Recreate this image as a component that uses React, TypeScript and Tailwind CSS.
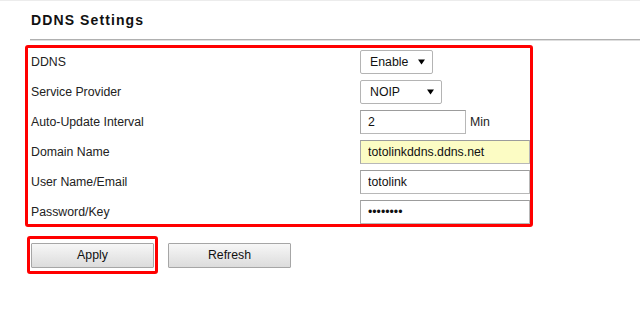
import React from 'react';

const rows = [
  { label: 'DDNS', kind: 'select', value: 'Enable', width: 'w-[73px]' },
  { label: 'Service Provider', kind: 'select', value: 'NOIP', width: 'w-[82px]' },
  { label: 'Auto-Update Interval', kind: 'interval', value: '2' },
  { label: 'Domain Name', kind: 'domain', value: 'totolinkddns.ddns.net' },
  { label: 'User Name/Email', kind: 'text', value: 'totolink' },
  { label: 'Password/Key', kind: 'password', value: 'totolink' },
];

const Caret = () => (
  <svg width="7" height="6" viewBox="0 0 7 6" className="shrink-0">
    <path d="M0 0.5 L7 0.5 L3.5 5.5 Z" fill="#000" />
  </svg>
);

const FakeSelect = ({ value, width }: { value: string; width: string }) => (
  <div
    className={`${width} h-[24px] flex items-center justify-between pl-[9px] pr-[7px] bg-white border border-[#b4b4b4] rounded-[2px] text-[#111]`}
  >
    <span>{value}</span>
    <Caret />
  </div>
);

const inputBase =
  'h-[24px] pl-[7px] border border-[#b8b8b8] border-t-[#9c9c9c] border-l-[#a8a8a8] text-[#111] outline-none';

const App = () => {
  return (
    <div className="w-[640px] h-[315px] bg-white border-t border-[#ececec] font-['Liberation_Sans',Arial,sans-serif] text-[12.3px] text-[#222]">
      <div className="pl-[30px] pt-[11px]">
        <h1 className="pl-[1px] text-[14px] leading-[16px] font-bold tracking-[1.1px] text-[#111]">
          DDNS Settings
        </h1>
        <div className="mt-[11px] h-[2px] bg-[#b0b0b0] border-b border-[#dedede]" />
      </div>

      {/* Settings box */}
      <div className="ml-[25px] mt-[4px] w-[508px] border-[3px] border-[#ff0000] rounded-[3px] pt-[2px] flex flex-col gap-[6px]">
        {rows.map((row) => (
          <div key={row.label} className="h-[24px] flex items-center">
            <div className="w-[332px] pl-[3px]">{row.label}</div>
            {row.kind === 'select' && <FakeSelect value={row.value} width={row.width!} />}
            {row.kind === 'interval' && (
              <div className="flex items-center">
                <input readOnly value={row.value} className={`${inputBase} w-[106px] bg-white`} />
                <span className="ml-[4px]">Min</span>
              </div>
            )}
            {row.kind === 'domain' && (
              <input readOnly value={row.value} className={`${inputBase} w-[170px] bg-[#fcfcc4]`} />
            )}
            {row.kind === 'text' && (
              <input readOnly value={row.value} className={`${inputBase} w-[170px] bg-white`} />
            )}
            {row.kind === 'password' && (
              <input readOnly type="password" value={row.value} className={`${inputBase} w-[170px] bg-white`} />
            )}
          </div>
        ))}
      </div>

      {/* Buttons */}
      <div className="ml-[27px] mt-[9px] flex items-start gap-[10px]">
        <div className="border-[3px] border-[#ff0000] rounded-[3px] px-[1px] pt-[4px] pb-[3px]">
          <button className="w-[123px] h-[25px] border border-[#a6a6a6] bg-gradient-to-b from-[#f7f7f7] to-[#dcdcdc] text-[#111] rounded-[1px]">
            Apply
          </button>
        </div>
        <button className="mt-[7px] w-[123px] h-[25px] border border-[#a6a6a6] bg-gradient-to-b from-[#f7f7f7] to-[#dcdcdc] text-[#111] rounded-[1px]">
          Refresh
        </button>
      </div>
    </div>
  );
};

export default App;
